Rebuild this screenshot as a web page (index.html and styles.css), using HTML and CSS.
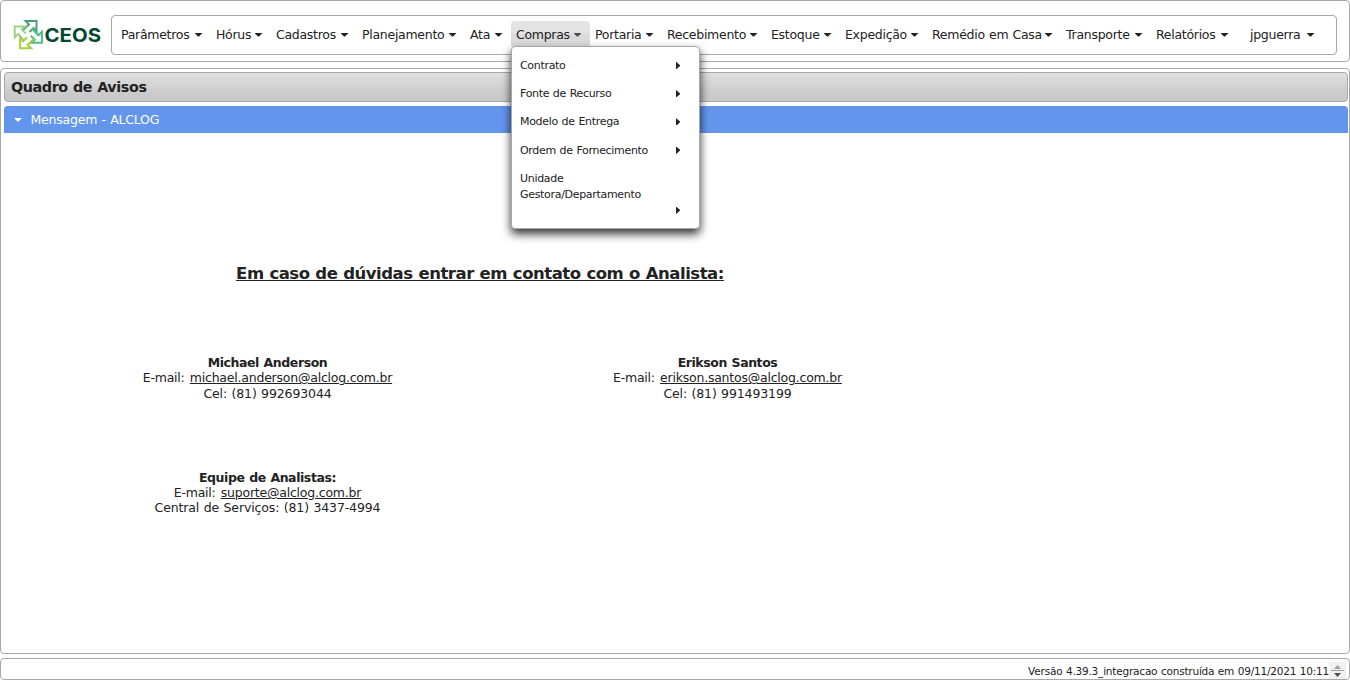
FILE: index.html
```html
<!DOCTYPE html>
<html lang="pt-BR">
<head>
<meta charset="utf-8">
<title>CEOS</title>
<link rel="stylesheet" href="styles.css">
</head>
<body>
<header class="top">
  <svg class="logo" width="90" height="34" viewBox="0 0 90 34">
    <defs><path id="turn" d="M10.500 12.500L17 6.500L13.500 3H24.500V13.500L21.500 10L17.500 14"/></defs>
    <g fill="none" stroke-width="2">
      <use href="#turn" stroke="#4c9f78"/>
      <use href="#turn" stroke="#4bbd85" transform="rotate(90 16.300 16.600)"/>
      <use href="#turn" stroke="#a5cf43" transform="rotate(180 16.300 16.600)"/>
      <use href="#turn" stroke="#9fd184" transform="rotate(270 16.300 16.600)"/>
    </g>
    <text class="brand" x="32.500" y="23.500" textLength="56.500" lengthAdjust="spacingAndGlyphs">CEOS</text>
  </svg>
  <nav class="menu">
    <div class="item" style="width:95px">Parâmetros<i class="caret"></i></div>
    <div class="item" style="width:60px">Hórus<i class="caret"></i></div>
    <div class="item" style="width:86px">Cadastros<i class="caret"></i></div>
    <div class="item" style="width:108px">Planejamento<i class="caret"></i></div>
    <div class="item" style="width:46px">Ata<i class="caret"></i></div>
    <div class="item active" style="width:79px">Compras<i class="caret"></i>
      <ul class="submenu">
        <li>Contrato<i class="arrow"></i></li>
        <li>Fonte de Recurso<i class="arrow"></i></li>
        <li>Modelo de Entrega<i class="arrow"></i></li>
        <li>Ordem de Fornecimento<i class="arrow"></i></li>
        <li class="tall"><span>Unidade<br>Gestora/Departamento</span><i class="arrow"></i></li>
      </ul>
    </div>
    <div class="item" style="width:72px">Portaria<i class="caret"></i></div>
    <div class="item" style="width:104px">Recebimento<i class="caret"></i></div>
    <div class="item" style="width:74px">Estoque<i class="caret"></i></div>
    <div class="item" style="width:87px">Expedição<i class="caret"></i></div>
    <div class="item" style="width:134px">Remédio em Casa<i class="caret"></i></div>
    <div class="item" style="width:90px">Transporte<i class="caret"></i></div>
    <div class="item" style="width:86px">Relatórios<i class="caret"></i></div>
    <div class="item user" style="width:78px">jpguerra<i class="caret"></i></div>
  </nav>
</header>
<main class="content">
  <h1 class="title">Quadro de Avisos</h1>
  <h2 class="panel-head"><i class="caret"></i>Mensagem - ALCLOG</h2>
  <section class="message">
    <h3 class="headline">Em caso de dúvidas entrar em contato com o Analista:</h3>
    <div class="contacts">
      <p><b>Michael Anderson</b><br>E-mail: <a>michael.anderson@alclog.com.br</a><br><span class="phone">Cel: (81) 992693044</span></p>
      <p><b>Erikson Santos</b><br>E-mail: <a>erikson.santos@alclog.com.br</a><br><span class="phone">Cel: (81) 991493199</span></p>
      <p><b>Equipe de Analistas:</b><br>E-mail: <a>suporte@alclog.com.br</a><br><span class="phone">Central de Serviços: (81) 3437-4994</span></p>
    </div>
  </section>
</main>
<footer class="footer">
  <span>Versão 4.39.3_integracao construída em 09/11/2021 10:11</span>
  <svg width="17" height="17" viewBox="0 0 17 17"><path fill="#f0f0f0" d="M0 0h17v17H0z"/><path fill="#a0a0a0" d="M5 7L8.500 3L12 7zM2 8h13v1H2z"/><path fill="#505050" d="M5 11h7L8.500 15z"/></svg>
</footer>
</body>
</html>
```
FILE: styles.css
```css
* { box-sizing: border-box; }
body {
  margin: 0;
  height: 680px;
  overflow: hidden;
  display: flex;
  flex-direction: column;
  background: #fff;
  color: #222;
  font-family: "DejaVu Sans", Verdana, sans-serif;
  font-size: 12.5px;
}
.top, .content, .footer { border: 1px solid #a8a8a8; border-radius: 4px; }
.top {
  height: 62px;
  display: flex;
  flex: none;
  align-items: flex-start;
  padding: 14px 12px 0 11px;
}
.logo { margin-top: 3px; flex: none; }
.brand { font: bold 19px Inter, sans-serif; fill: #00482f; }
.menu {
  width: 1226px;
  height: 40px;
  margin-left: 9px;
  padding: 5px 4px;
  display: flex;
  flex: none;
  border: 1px solid #a8a8a8;
  border-radius: 4px;
  letter-spacing: -.28px;
  word-spacing: .5px;
}
.item {
  flex: none;
  height: 27px;
  padding: 0 8px 0 5px;
  display: flex;
  align-items: center;
  justify-content: space-between;
  white-space: nowrap;
  position: relative;
}
.user { margin-left: 8px; }
.active { background: linear-gradient(#e3e3e3 50%, #dadada 50%); border-radius: 4px; }
.active > .caret { background: #4a4a4a; }
.caret {
  flex: none;
  width: 8px;
  height: 4px;
  margin-right: .5px;
  background: #222;
  clip-path: polygon(0 0, 100% 0, 100% 12%, 56% 100%, 44% 100%, 0 12%);
}
.submenu {
  position: absolute;
  z-index: 2;
  left: 0;
  top: 25px;
  width: 189px;
  height: 183px;
  margin: 0;
  padding: 5px 0 0;
  list-style: none;
  background: #fff;
  border: 1px solid #a8a8a8;
  border-radius: 4px;
  box-shadow: 0 5px 10px rgba(0, 0, 0, .8);
  font-size: 11px;
  line-height: 16px;
  letter-spacing: -.31px;
}
.submenu li {
  height: 28.2px;
  padding: 6px 19px 6px 8px;
  display: flex;
  align-items: center;
  justify-content: space-between;
}
.submenu .tall { height: 60px; align-items: flex-start; }
.arrow {
  width: 4px;
  height: 7px;
  margin-bottom: 1px;
  background: #222;
  clip-path: polygon(0 0, 12% 0, 100% 45%, 100% 55%, 12% 100%, 0 100%);
}
.tall .arrow { align-self: flex-end; margin-bottom: 5px; }
.content { flex: none; height: 586px; margin-top: 6px; padding: 3px 1px 0 3px; }
.title {
  height: 30px;
  margin: 0 0 4px;
  padding-left: 6px;
  border: 1px solid #a8a8a8;
  border-radius: 4px;
  background: linear-gradient(#e0e0e0, #cacaca 75%);
  font-size: 14.300px;
  line-height: 29px;
  letter-spacing: -.38px;
  word-spacing: .5px;
}
.panel-head {
  height: 27px;
  margin: 0;
  padding-left: 10px;
  display: flex;
  align-items: center;
  gap: 8px;
  border-radius: 4px 4px 0 0;
  background: #6495ed;
  color: #fff;
  font-size: 12.5px;
  font-weight: normal;
  letter-spacing: -.2px;
  word-spacing: .5px;
}
.panel-head .caret { background: #fff; }
.message { padding-top: 130.5px; }
.headline {
  width: 952px;
  margin: 0;
  text-align: center;
  text-decoration: underline;
  font-size: 16.500px;
  line-height: 20px;
  letter-spacing: -.47px;
  word-spacing: .5px;
}
.contacts {
  width: 920px;
  margin: 71.5px 0 0 33.5px;
  display: grid;
  grid-template-columns: 460px 460px;
  row-gap: 69px;
  text-align: center;
  line-height: 15.300px;
  letter-spacing: -.24px;
  word-spacing: 1.5px;
}
.contacts p { margin: 0; }
.contacts b { letter-spacing: -.42px; word-spacing: .7px; }
.contacts a { text-decoration: underline; letter-spacing: -.22px; }
.phone { letter-spacing: -.12px; word-spacing: .6px; }
.footer {
  flex: none;
  height: 22px;
  margin-top: 4px;
  padding: 3px 3px 0 0;
  display: flex;
  justify-content: flex-end;
  font-size: 10.500px;
  line-height: 19px;
  letter-spacing: -.2px;
  word-spacing: .4px;
}
```
